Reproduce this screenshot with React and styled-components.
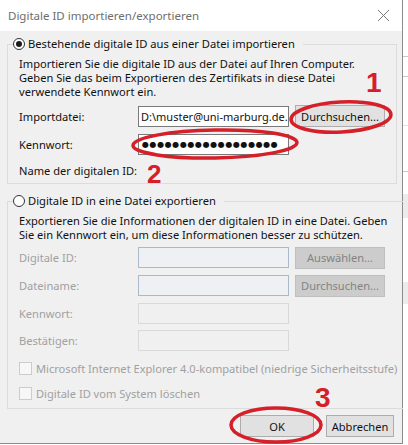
import React from 'react';
import styled, { createGlobalStyle } from 'styled-components';

const GlobalStyle = createGlobalStyle`
  html, body {
    margin: 0;
    padding: 0;
    background: #ffffff;
  }
  body {
    font-family: "Noto Sans", "Open Sans", sans-serif;
    font-size: 11px;
    color: #1a1a1a;
  }
`

const Page = styled.div`
  position: relative;
  display: flex;
  width: 408px;
  height: 445px;
  overflow: hidden;
`

const Dialog = styled.div`
  display: flex;
  flex-direction: column;
  width: 402px;
  height: 443px;
  background: #f0f0f0;
  border-right: 1px solid #8c8c8c;
  border-bottom: 1px solid #8c8c8c;
`

const TitleBar = styled.div`
  display: flex;
  align-items: center;
  justify-content: space-between;
  height: 31px;
  padding: 0 12px 0 8px;
  background: #ffffff;
  flex-shrink: 0;
`

const Title = styled.span`
  font-size: 11.5px;
  color: #6e6e6e;
`

const Body = styled.div`
  display: flex;
  flex-direction: column;
  padding: 6px 5px 0 7px;
`

const Group = styled.fieldset`
  margin: 0;
  padding: 0 10px 0 10px;
  border: 1px solid #dcdcdc;
  height: ${p => p.$height}px;
  box-sizing: border-box;
  margin-top: ${p => p.$top || 0}px;
`

const Legend = styled.legend`
  display: flex;
  align-items: center;
  gap: 3px;
  padding: 0 8px 0 0;
  margin-left: -5px;
  height: 14px;
  line-height: 14px;
  font-size: 11.2px;
  color: #111;
`

const Radio = styled.span`
  width: 12px;
  height: 12px;
  box-sizing: border-box;
  border: 1px solid #333;
  border-radius: 50%;
  background: #fff;
  display: flex;
  align-items: center;
  justify-content: center;
  &::after {
    content: '';
    display: ${p => (p.$checked ? 'block' : 'none')};
    width: 6px;
    height: 6px;
    border-radius: 50%;
    background: #1a1a1a;
  }
`

const Description = styled.p`
  margin: ${p => p.$top || 3}px 0 0 1px;
  font-size: 11.1px;
  line-height: 14px;
  color: #111;
  white-space: nowrap;
`

const Rows = styled.div`
  display: flex;
  flex-direction: column;
  gap: ${p => p.$gap || 7}px;
  margin-top: ${p => p.$top || 0}px;
`

const Row = styled.div`
  display: flex;
  align-items: center;
  height: ${p => p.$height || 20}px;
`

const Label = styled.span`
  width: 119px;
  padding-left: 1px;
  font-size: 11.1px;
  white-space: nowrap;
  color: ${p => (p.$disabled ? '#a0a0a0' : '#111')};
  flex-shrink: 0;
`

const Field = styled.div`
  width: 151px;
  height: ${p => p.$height || 21}px;
  box-sizing: border-box;
  border: 1px solid ${p => p.$border || '#7a7a7a'};
  background: ${p => p.$bg || '#ffffff'};
  display: flex;
  align-items: center;
  padding-left: 2px;
  overflow: hidden;
  white-space: nowrap;
  font-size: 11px;
  color: #111;
  flex-shrink: 0;
`

const Dots = styled.span`
  font-size: 8px;
  letter-spacing: 0.6px;
  padding-left: 1px;
  font-family: "DejaVu Sans", sans-serif;
`

const Button = styled.div`
  display: flex;
  align-items: center;
  justify-content: center;
  width: ${p => p.$width || 90}px;
  height: ${p => p.$height || 22}px;
  box-sizing: border-box;
  margin-left: ${p => p.$gap ?? 6}px;
  border: 1px solid ${p => (p.$disabled ? '#bfbfbf' : '#adadad')};
  background: ${p => (p.$disabled ? '#cccccc' : '#e1e1e1')};
  color: ${p => (p.$disabled ? '#838383' : '#111')};
  font-size: 11.1px;
  flex-shrink: 0;
`

const CheckRow = styled.div`
  display: flex;
  align-items: center;
  gap: 4px;
  height: 13px;
  margin-left: 1px;
  font-size: 11.1px;
  color: #a0a0a0;
  white-space: nowrap;
`

const Checkbox = styled.span`
  width: 13px;
  height: 13px;
  box-sizing: border-box;
  border: 1px solid #cccccc;
  background: #f7f7f7;
  flex-shrink: 0;
`

const Footer = styled.div`
  display: flex;
  justify-content: flex-end;
  gap: 12px;
  padding: 6px 3px 0 0;
`

const Strip = styled.div`
  flex: 1;
  display: flex;
  flex-direction: column;
  background: #ffffff;
`

const StripLine = styled.div`
  margin-top: ${p => p.$top}px;
  height: ${p => p.$h || 1}px;
  background: ${p => p.$color || '#c8c8c8'};
`

const Annotations = styled.svg`
  position: absolute;
  left: 0;
  top: 0;
  pointer-events: none;
`

const Mark = styled.text`
  font-family: "Liberation Sans", Arial, sans-serif;
  font-weight: 700;
  fill: #d5202a;
`

const CloseIcon = () => (
  <svg width="13" height="13" viewBox="0 0 13 13">
    <path d="M1 1 L12 12 M12 1 L1 12" stroke="#7a7a7a" strokeWidth="1" fill="none" />
  </svg>
)

export default function App() {
  return (
    <Page>
      <GlobalStyle />
      <Dialog>
        <TitleBar>
          <Title>Digitale ID importieren/exportieren</Title>
          <CloseIcon />
        </TitleBar>
        <Body>
          <Group $height={147}>
            <Legend>
              <Radio $checked />
              Bestehende digitale ID aus einer Datei importieren
            </Legend>
            <Description $top={6}>
              Importieren Sie die digitale ID aus der Datei auf Ihren Computer.<br />
              Geben Sie das beim Exportieren des Zertifikats in diese Datei<br />
              verwendete Kennwort ein.
            </Description>
            <Rows $top={6} $gap={6}>
              <Row $height={22}>
                <Label>Importdatei:</Label>
                <Field>D:\muster@uni-marburg.de.pfx</Field>
                <Button>Durchsuchen...</Button>
              </Row>
              <Row $height={22}>
                <Label>Kennwort:</Label>
                <Field><Dots>●●●●●●●●●●●●●●●●●●</Dots></Field>
              </Row>
              <Row $height={18}>
                <Label>Name der digitalen ID:</Label>
              </Row>
            </Rows>
          </Group>

          <Group $height={215} $top={10}>
            <Legend>
              <Radio />
              Digitale ID in eine Datei exportieren
            </Legend>
            <Description $top={6}>
              Exportieren Sie die Informationen der digitalen ID in eine Datei. Geben<br />
              Sie ein Kennwort ein, um diese Informationen besser zu schützen.
            </Description>
            <Rows $top={5} $gap={7}>
              <Row $height={21}>
                <Label $disabled>Digitale ID:</Label>
                <Field $border="#aab8cc" $bg="#eef0f3" />
                <Button $disabled>Auswählen...</Button>
              </Row>
              <Row $height={21}>
                <Label $disabled>Dateiname:</Label>
                <Field $border="#aab8cc" $bg="#eef0f3" />
                <Button $disabled>Durchsuchen...</Button>
              </Row>
              <Row $height={20}>
                <Label $disabled>Kennwort:</Label>
                <Field $border="#d9d9d9" $bg="#f0f0f0" />
              </Row>
              <Row $height={20}>
                <Label $disabled>Bestätigen:</Label>
                <Field $border="#d9d9d9" $bg="#f0f0f0" />
              </Row>
            </Rows>
            <Rows $top={12} $gap={12}>
              <CheckRow>
                <Checkbox />
                Microsoft Internet Explorer 4.0-kompatibel (niedrige Sicherheitsstufe)
              </CheckRow>
              <CheckRow>
                <Checkbox />
                Digitale ID vom System löschen
              </CheckRow>
            </Rows>
          </Group>

          <Footer>
            <Button $width={74} $gap={0}>OK</Button>
            <Button $width={68} $gap={0}>Abbrechen</Button>
          </Footer>
        </Body>
      </Dialog>
      <Strip>
        <StripLine $top={56} />
        <StripLine $top={19} />
        <StripLine $top={48} $color="#e4e4e4" $h={1} />
        <StripLine $top={45} />
        <StripLine $top={22} $color="#ececec" $h={24} />
        <StripLine $top={64} $color="#ececec" $h={22} />
      </Strip>

      <Annotations width="408" height="445" viewBox="0 0 408 445">
        <g fill="none" stroke="#d5202a" strokeWidth="3.5">
          <ellipse cx="341" cy="117" rx="50" ry="15" transform="rotate(-3 341 117)" />
          <ellipse cx="215" cy="144" rx="82" ry="14" transform="rotate(-1 215 144)" />
          <ellipse cx="276" cy="425" rx="45" ry="17" />
        </g>
        <Mark x="366" y="92" fontSize="28">1</Mark>
        <Mark x="147" y="183" fontSize="26">2</Mark>
        <Mark x="315" y="407" fontSize="28">3</Mark>
      </Annotations>
    </Page>
  );
}
